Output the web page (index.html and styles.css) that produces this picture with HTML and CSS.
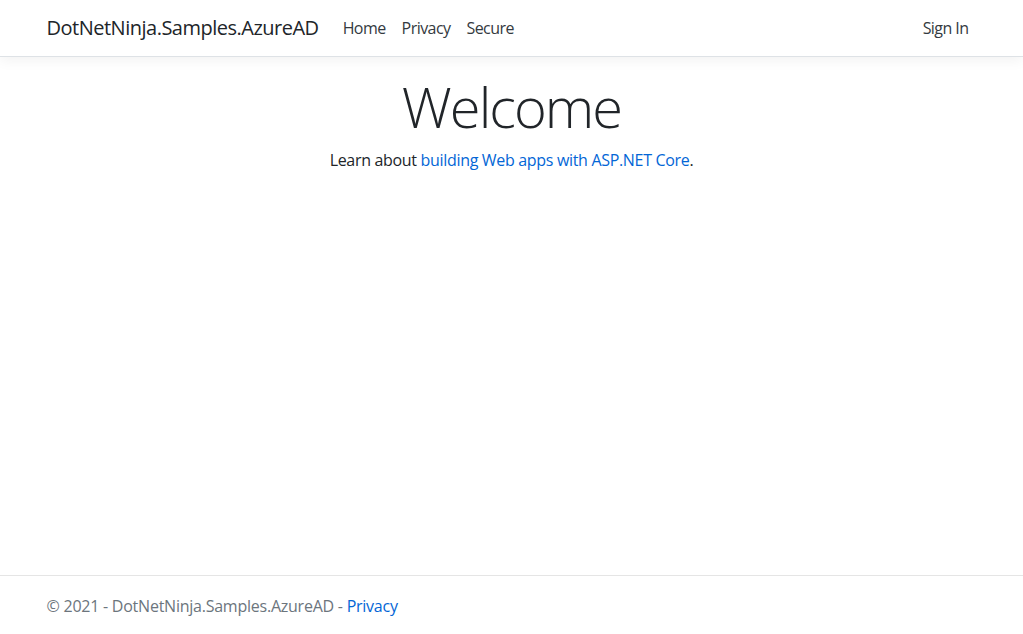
FILE: index.html
```html
<!DOCTYPE html>
<html lang="en">
<head>
<meta charset="utf-8">
<title>Home Page - DotNetNinja.Samples.AzureAD</title>
<link rel="stylesheet" href="styles.css">
</head>
<body>
<header class="header">
  <nav class="navbar">
    <div class="container navbar-inner">
      <a class="brand" href="#">DotNetNinja.Samples.AzureAD</a>
      <ul class="nav nav-main">
        <li><a class="nav-link" href="#">Home</a></li>
        <li><a class="nav-link" href="#">Privacy</a></li>
        <li><a class="nav-link" href="#">Secure</a></li>
      </ul>
      <ul class="nav nav-right">
        <li><a class="nav-link" href="#">Sign In</a></li>
      </ul>
    </div>
  </nav>
</header>
<main class="container main">
  <div class="welcome">
    <h1 class="display">Welcome</h1>
    <p class="lead-text">Learn about <a class="link" href="#">building Web apps with ASP.NET Core</a>.</p>
  </div>
</main>
<footer class="footer">
  <div class="container footer-inner">
    &copy; 2021 - DotNetNinja.Samples.AzureAD - <a class="link" href="#">Privacy</a>
  </div>
</footer>
</body>
</html>
```
FILE: styles.css
```css
* { box-sizing: border-box; }
html, body { margin: 0; padding: 0; }
body {
  font-family: "Open Sans", "Noto Sans", sans-serif;
  font-size: 16px;
  line-height: 1.5;
  letter-spacing: -0.02em;
  color: #212529;
  background: #fff;
  min-height: 100vh;
  display: flex;
  flex-direction: column;
}
a { text-decoration: none; }
.container {
  width: 100%;
  max-width: 960px;
  margin: 0 auto;
  padding: 0 15px;
}
.navbar {
  background: #fff;
  border-bottom: 1px solid #dee2e6;
  box-shadow: 0 4px 12px rgba(0,0,0,.05);
  padding: 8px 16px;
  margin-bottom: 16px;
}
.navbar-inner {
  display: flex;
  align-items: center;
}
.brand {
  color: #212529;
  font-size: 20px;
  line-height: 30px;
  padding: 5px 0;
  margin-right: 16px;
  letter-spacing: -0.025em;
}
.nav {
  list-style: none;
  margin: 0;
  padding: 0;
  display: flex;
}
.nav-main { flex: 1; }
.nav-link {
  display: block;
  padding: 8px;
  color: #343a40;
  line-height: 24px;
  letter-spacing: -0.035em;
}
.main { flex: 1; padding-bottom: 16px; }
.welcome { text-align: center; }
.display {
  font-size: 56px;
  font-weight: 300;
  line-height: 1.2;
  margin: 0 0 8px;
  letter-spacing: -0.035em;
}
.lead-text { margin: 0 0 16px; }
.link { color: #0366d6; }
.footer {
  border-top: 1px solid #e5e5e5;
  color: #6c757d;
  line-height: 60px;
  height: 59px;
  white-space: nowrap;
  letter-spacing: -0.015em;
}
```
